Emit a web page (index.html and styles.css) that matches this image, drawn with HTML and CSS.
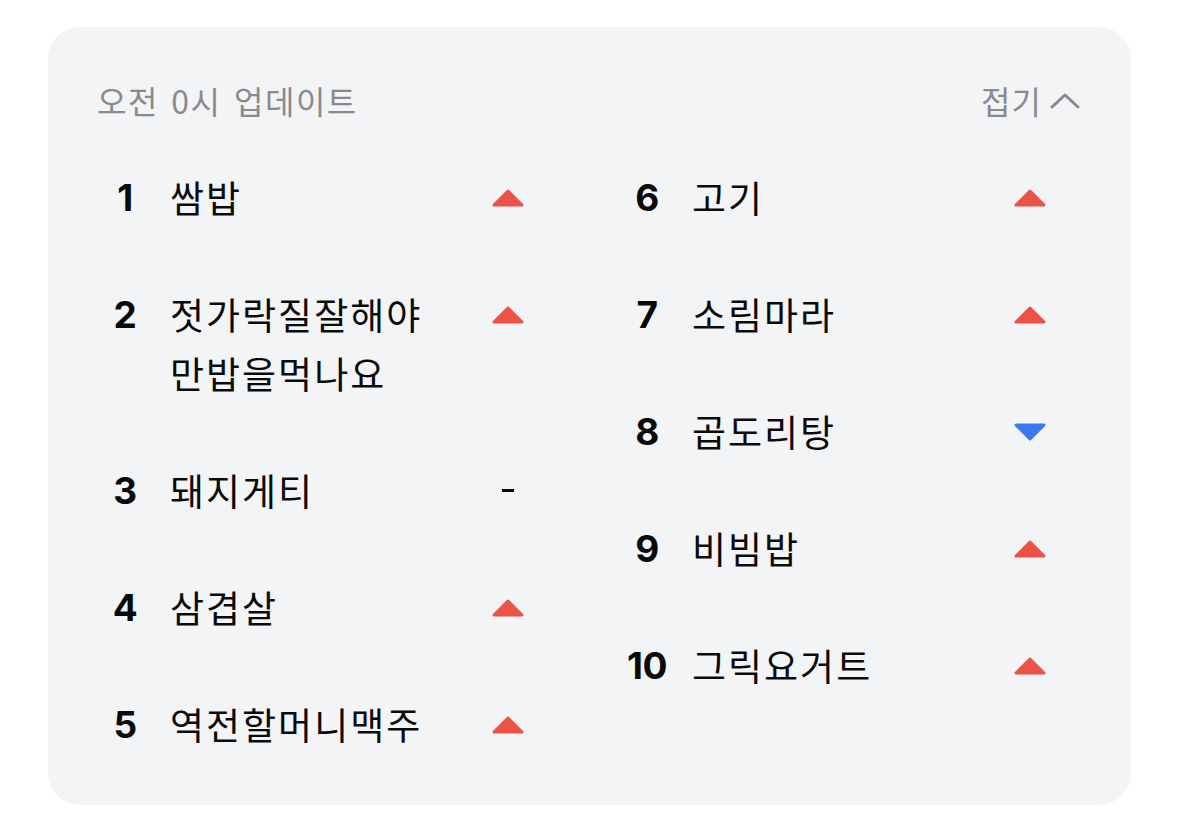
FILE: index.html
```html
<!DOCTYPE html>
<html lang="ko">
<head>
<meta charset="utf-8">
<link rel="stylesheet" href="styles.css">
</head>
<body>
<section class="card">
  <header class="card-head">
    <span class="updated">오전 0시 업데이트</span>
    <button class="fold">접기<svg class="chev" width="30" height="16" viewBox="0 0 30 16"><path d="M2 14 L15 2 L28 14" fill="none" stroke="#8a8a8e" stroke-width="3" stroke-linecap="round" stroke-linejoin="round"/></svg></button>
  </header>
  <div class="ranks">
    <ol class="col">
      <li class="item"><span class="num">1</span><span class="name">쌈밥</span><span class="trend"><svg class="up" width="34" height="20" viewBox="0 0 34 20"><path d="M17 3 L31 17 L3 17 Z"/></svg></span></li>
      <li class="item"><span class="num">2</span><span class="name">젓가락질잘해야만밥을먹나요</span><span class="trend"><svg class="up" width="34" height="20" viewBox="0 0 34 20"><path d="M17 3 L31 17 L3 17 Z"/></svg></span></li>
      <li class="item"><span class="num">3</span><span class="name">돼지게티</span><span class="trend"><span class="dash"></span></span></li>
      <li class="item"><span class="num">4</span><span class="name">삼겹살</span><span class="trend"><svg class="up" width="34" height="20" viewBox="0 0 34 20"><path d="M17 3 L31 17 L3 17 Z"/></svg></span></li>
      <li class="item"><span class="num">5</span><span class="name">역전할머니맥주</span><span class="trend"><svg class="up" width="34" height="20" viewBox="0 0 34 20"><path d="M17 3 L31 17 L3 17 Z"/></svg></span></li>
    </ol>
    <ol class="col">
      <li class="item"><span class="num">6</span><span class="name">고기</span><span class="trend"><svg class="up" width="34" height="20" viewBox="0 0 34 20"><path d="M17 3 L31 17 L3 17 Z"/></svg></span></li>
      <li class="item"><span class="num">7</span><span class="name">소림마라</span><span class="trend"><svg class="up" width="34" height="20" viewBox="0 0 34 20"><path d="M17 3 L31 17 L3 17 Z"/></svg></span></li>
      <li class="item"><span class="num">8</span><span class="name">곱도리탕</span><span class="trend"><svg class="down" width="34" height="20" viewBox="0 0 34 20"><path d="M3 3 L31 3 L17 17 Z"/></svg></span></li>
      <li class="item"><span class="num">9</span><span class="name">비빔밥</span><span class="trend"><svg class="up" width="34" height="20" viewBox="0 0 34 20"><path d="M17 3 L31 17 L3 17 Z"/></svg></span></li>
      <li class="item"><span class="num">10</span><span class="name">그릭요거트</span><span class="trend"><svg class="up" width="34" height="20" viewBox="0 0 34 20"><path d="M17 3 L31 17 L3 17 Z"/></svg></span></li>
    </ol>
  </div>
</section>
</body>
</html>
```

FILE: styles.css
```css
* { box-sizing: border-box; }
html, body { margin: 0; background: #ffffff; }
body {
  padding: 27px 48px;
  font-family: "Noto Sans CJK KR", "Noto Sans", sans-serif;
  color: #0a0a0a;
}
.card {
  background: #f3f4f6;
  border-radius: 32px;
  padding: 53px 51px 51px 49px;
}
.card-head {
  display: flex;
  justify-content: space-between;
  align-items: center;
  height: 40px;
  font-size: 32px;
  color: #8a8a8e;
}
.updated {
  line-height: 40px;
  letter-spacing: 1.5px;
  word-spacing: 2px;
}
.fold {
  display: flex;
  align-items: center;
  gap: 8px;
  border: 0;
  background: none;
  padding: 0;
  font: inherit;
  color: inherit;
  line-height: 40px;
  letter-spacing: 1px;
}
.chev { display: block; margin-top: 2px; }
.ranks {
  display: grid;
  grid-template-columns: 428px 428px;
  column-gap: 94px;
  margin-top: 48px;
}
.col {
  list-style: none;
  margin: 0;
  padding: 0;
  display: flex;
  flex-direction: column;
  gap: 58px;
}
.item {
  display: flex;
  align-items: flex-start;
}
.num {
  flex: 0 0 56px;
  text-align: center;
  font-family: Inter, "Liberation Sans", sans-serif;
  font-weight: 700;
  font-size: 37px;
  line-height: 59px;
  letter-spacing: -0.5px;
}
.name {
  flex: 0 0 270px;
  margin-left: 17px;
  font-size: 37px;
  line-height: 59px;
  letter-spacing: 2px;
}
.trend {
  margin-left: auto;
  width: 34px;
  height: 59px;
  display: flex;
  align-items: center;
  justify-content: center;
}
.trend svg { display: block; }
.up path { fill: #ec5246; stroke: #ec5246; stroke-width: 3; stroke-linejoin: round; }
.down path { fill: #3a78f2; stroke: #3a78f2; stroke-width: 3; stroke-linejoin: round; }
.dash {
  display: block;
  width: 12px;
  height: 3px;
  background: #0a0a0a;
}
```
